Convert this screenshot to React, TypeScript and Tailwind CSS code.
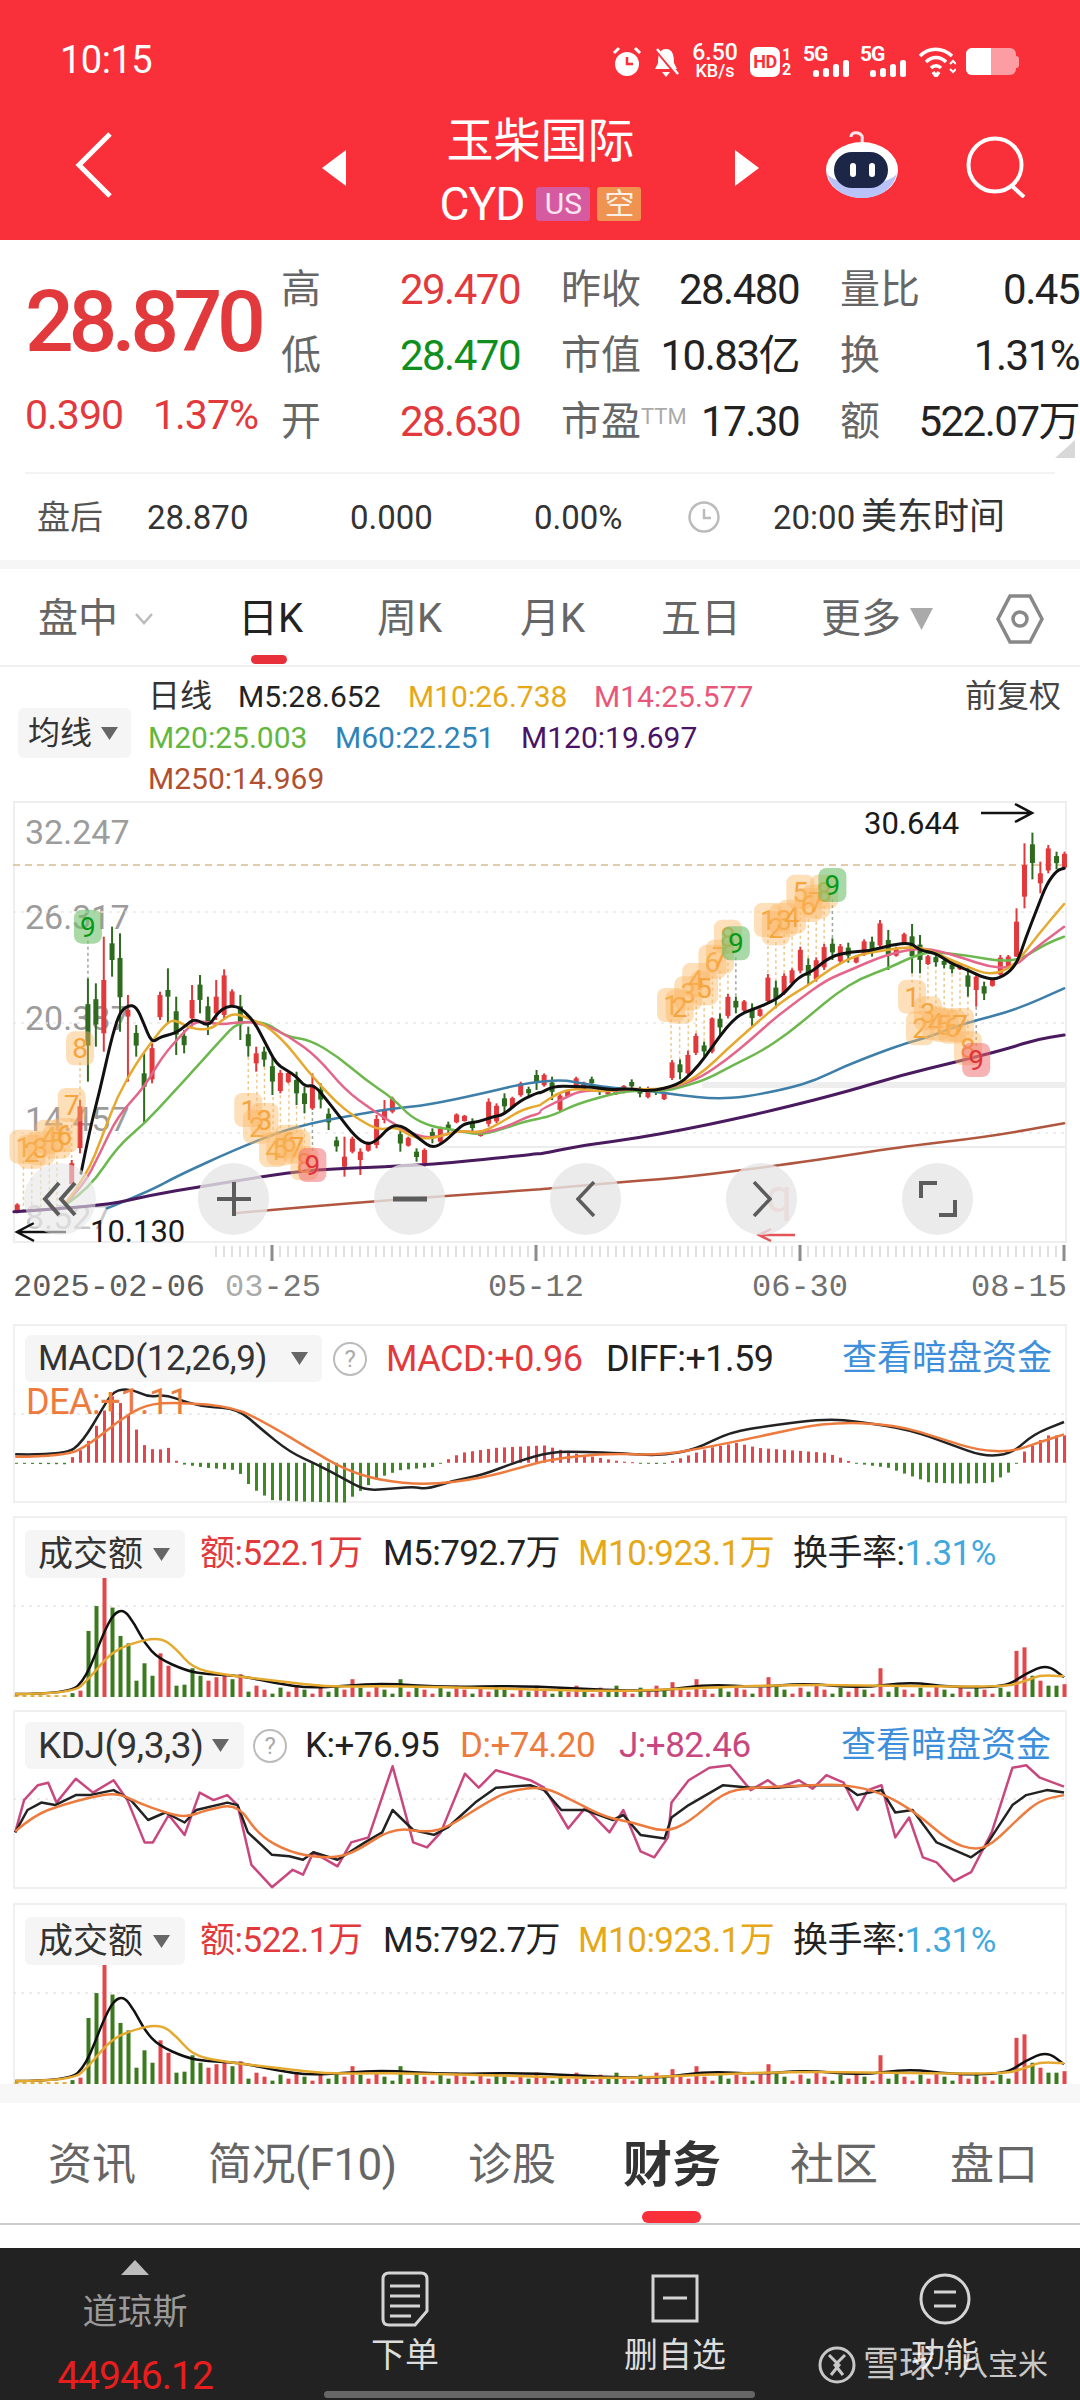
import React from 'react';

type Pt = number[];

const pairs = (s: string): Pt[] => s.trim().split(/\s+/).map((p) => p.split(',').map(Number));
const z5 = ([x, y]: Pt): Pt => [x / 2.9, 780 + y / 3];
const z6 = ([x, y]: Pt): Pt => [540 + x / 2.9, 780 + y / 3];
const z3 = ([x, y]: Pt): Pt => [x / 1.452, 1320 + y / 2.01];

const smooth = (pts: Pt[]) => {
  let d = `M${pts[0][0].toFixed(1)} ${pts[0][1].toFixed(1)}`;
  for (let i = 1; i < pts.length - 1; i++) {
    const mx = (pts[i][0] + pts[i + 1][0]) / 2;
    const my = (pts[i][1] + pts[i + 1][1]) / 2;
    d += ` Q${pts[i][0].toFixed(1)} ${pts[i][1].toFixed(1)} ${mx.toFixed(1)} ${my.toFixed(1)}`;
  }
  const last = pts[pts.length - 1];
  return d + ` L${last[0].toFixed(1)} ${last[1].toFixed(1)}`;
};
const straight = (pts: Pt[]) => pts.map((p) => `${p[0].toFixed(1)},${p[1].toFixed(1)}`).join(' ');

const both = (a: string, b: string) => [...pairs(a).map(z5), ...pairs(b).map(z6)];

// moving averages, read off the zoomed reference
const maLines = [
  {
    color: '#3d7fa8',
    w: 2.5,
    pts: both(
      '310,1285 430,1235 520,1185 680,1110 800,1060 900,1030 1000,1010 1140,985 1240,975 1400,940 1500,915 1568,905',
      '0,905 70,900 130,912 220,925 300,930 400,945 510,957 600,950 720,925 800,900 880,860 980,820 1060,790 1130,770 1230,730 1380,690 1520,625',
    ),
  },
  {
    color: '#4a1a5e',
    w: 3,
    pts: both(
      '40,1295 290,1280 440,1245 580,1220 760,1190 900,1170 1120,1160 1300,1150 1568,1120',
      '0,1122 130,1095 280,1075 420,1048 550,1020 700,985 890,935 1050,885 1210,845 1360,805 1440,778 1520,765',
    ),
  },
  {
    color: '#b0563f',
    w: 2.5,
    pts: both('680,1300 1000,1270 1568,1228', '0,1228 250,1205 440,1190 700,1155 900,1125 1050,1100 1300,1070 1520,1030'),
  },
  {
    color: '#6cb84e',
    w: 2.5,
    pts: both(
      '190,1275 260,1225 340,1100 420,1030 500,940 580,850 640,780 690,725 770,725 830,770 900,780 980,830 1060,900 1140,955 1190,1010 1250,1040 1320,1050 1390,1065 1450,1050 1520,1025 1568,1015',
      '0,1015 40,1005 100,975 180,950 260,930 360,935 430,915 490,895 560,855 640,815 720,760 790,700 860,640 930,595 1010,565 1080,530 1130,515 1230,525 1340,545 1400,535 1470,490 1520,470',
    ),
  },
  {
    color: '#e4668a',
    w: 2.5,
    pts: both(
      '190,1270 240,1220 290,1120 340,1010 420,920 470,830 530,760 570,720 640,735 700,725 760,730 840,770 920,830 1000,930 1080,990 1140,1030 1200,1065 1260,1075 1330,1050 1400,1060 1470,1040 1530,1010 1568,1000',
      '0,990 60,960 120,930 200,935 280,925 340,932 410,915 470,890 540,840 610,780 680,715 750,660 830,600 900,570 1000,525 1090,505 1150,510 1230,535 1300,560 1370,565 1430,510 1520,440',
    ),
  },
  {
    color: '#e6a92f',
    w: 2.5,
    pts: both(
      '190,1270 250,1190 300,1060 340,950 395,850 440,785 490,720 520,725 550,745 610,750 650,715 680,700 720,715 770,735 830,790 890,870 950,940 1000,990 1060,1030 1100,1050 1150,1040 1200,1075 1260,1075 1330,1050 1390,1060 1450,1030 1510,990 1568,975',
      '0,975 50,940 100,925 180,935 260,925 340,930 420,910 480,870 540,810 600,755 660,700 720,650 780,615 850,560 920,525 1000,510 1080,500 1130,510 1180,535 1240,560 1300,585 1370,565 1440,470 1520,372',
    ),
  },
  {
    color: '#111111',
    w: 3,
    pts: both(
      '235,1180 260,1050 290,930 320,790 345,700 372,675 395,680 415,725 440,790 465,770 510,760 540,735 565,715 605,740 630,700 655,680 685,678 710,695 740,730 770,790 800,850 830,870 860,890 885,920 910,915 940,950 985,1010 1030,1070 1065,1095 1095,1080 1130,1040 1160,1035 1190,1055 1220,1080 1255,1105 1290,1085 1330,1045 1350,1030 1390,1025 1430,1010 1460,1005 1510,960 1568,935',
      '0,940 40,918 100,920 150,920 200,930 260,925 320,935 400,915 440,880 480,830 520,770 560,720 595,695 640,680 700,650 750,590 790,575 840,530 900,515 960,512 1020,495 1075,488 1100,510 1150,520 1190,550 1240,570 1290,595 1330,598 1380,560 1410,470 1440,390 1470,310 1500,270 1520,265',
    ),
  },
];

// candles: colour x top bottom [bodyTop bodyBottom]
const c5 =
  'r 50 1270 1300|r 208 1140 1220|r 232 960 1120|g 255 595 905|g 278 610 800|r 301 470 815 600 760|g 325 440 590 490 540|g 348 460 755|r 371 645 905 690 710|g 395 735 830|g 418 820 1030 880 920|r 441 790 910|r 464 635 720|g 487 565 730 630 650|g 511 650 825|g 534 750 820|r 557 615 740 660 715|g 580 585 700|g 603 650 765|r 627 600 720 650 700|r 650 568 720|r 673 628 680|g 697 645 780|g 720 740 830|r 743 800 875 820 850|g 766 800 860|g 790 830 945|r 813 870 940|r 836 875 910|g 860 875 975|g 883 920 1000|r 906 880 990 915 985|g 930 910 985|g 953 985 1050|g 976 1070 1115|r 999 1070 1190 1130 1160|r 1022 1070 1120|r 1045 1105 1185 1115 1140|r 1068 1085 1115|r 1092 1005 1105|r 1115 960 1030 990 1020|r 1138 950 1000|g 1161 1045 1115|r 1184 1070 1100|g 1208 1105 1145|r 1231 1105 1160 1110 1150|g 1254 1045 1090|r 1277 1040 1090|g 1300 1025 1060|r 1324 1000 1030|r 1347 1005 1025|g 1370 1015 1060|r 1394 1050 1070|r 1417 955 1040|r 1440 970 1030|g 1463 940 1000|r 1486 950 985|r 1510 905 950|g 1533 920 950|g 1556 870 930';
const c6 =
  'r 12 880 920|g 35 890 960|r 58 940 995|r 80 930 950|r 105 890 930|r 127 905 930|g 150 890 920|g 173 920 945|r 197 925 945|r 220 925 945|r 243 915 940|g 266 898 930|g 290 920 952|r 313 920 955|g 336 925 945|r 360 935 960|r 383 840 900|g 406 838 898|r 429 812 885 825 880|r 452 760 825|g 476 785 830|r 499 712 820 715 815|g 522 700 765|r 545 642 715|g 568 650 700|r 592 660 695|g 615 670 738|r 638 685 710|r 661 582 672|g 684 602 685|r 708 580 645|r 731 565 615|r 755 500 580|g 778 535 615|r 801 532 605|r 824 492 570|g 848 475 540|r 871 492 550|g 894 488 548|r 917 525 550|r 940 478 528|g 963 470 530|r 986 420 505|g 1010 450 570|r 1033 500 530|r 1056 458 495|g 1079 432 580|g 1102 465 580|r 1125 525 555|g 1148 522 560|g 1172 535 565|g 1195 545 580|r 1218 550 570|g 1241 565 650|r 1265 585 680 590 630|g 1288 605 660|r 1312 595 620|r 1335 525 590|r 1358 525 565|r 1382 385 530 425 530|r 1405 190 385 255 350|g 1428 158 298|r 1451 245 340 280 310|r 1474 195 280|g 1498 215 268|r 1521 215 268';

const CRED = '#e2393d';
const CGREEN = '#2f6b1f';

const candles = [
  ...c5.split('|').map((s) => ({ s, f: z5 })),
  ...c6.split('|').map((s) => ({ s, f: z6 })),
].map(({ s, f }) => {
  const [c, ...n] = s.split(' ');
  const [x, top, bot, bt, bb] = n.map(Number);
  const up = c === 'r';
  const b1 = bt ?? (up ? top + (bot - top) * 0.12 : top + (bot - top) * 0.25);
  const b2 = bb ?? (up ? bot - (bot - top) * 0.1 : top + (bot - top) * 0.65);
  return {
    color: up ? CRED : CGREEN,
    x: f([x, 0])[0],
    top: f([x, top])[1],
    bot: f([x, bot])[1],
    b1: f([x, b1])[1],
    b2: f([x, b2])[1],
  };
});

// TD sequence badges: digit, x, y, tone, end of the dotted line
const seq5 = [
  [1, 68, 1100, 'o', 1290], [2, 92, 1115, 'o', 1290], [3, 118, 1105, 'o', 1290], [4, 143, 1070, 'o', 1290], [5, 165, 1085, 'o', 1290],
  [6, 187, 1065, 'o', 1140], [7, 208, 975, 'o', 1140], [8, 232, 805, 'o', 960], [9, 255, 440, 'g', 595],
  [1, 720, 990, 'o', 830], [2, 745, 1040, 'o', 850], [3, 767, 1020, 'o', 860], [4, 792, 1110, 'o', 945], [5, 813, 1105, 'o', 940],
  [6, 838, 1085, 'o', 910], [7, 860, 1100, 'o', 975], [8, 883, 1150, 'o', 1000], [9, 906, 1155, 'r', 990],
] as const;
const seq6 = [
  [1, 380, 675, 'o', 840], [2, 405, 680, 'o', 838], [3, 430, 640, 'o', 812], [4, 453, 600, 'o', 760], [5, 476, 625, 'o', 785],
  [6, 500, 545, 'o', 712], [7, 522, 530, 'o', 700], [8, 545, 470, 'o', 642], [9, 568, 490, 'g', 650],
  [1, 661, 420, 'o', 582], [2, 684, 445, 'o', 602], [3, 708, 420, 'o', 580], [4, 731, 410, 'o', 565], [5, 755, 335, 'o', 500],
  [6, 778, 375, 'o', 535], [7, 801, 365, 'o', 532], [8, 824, 335, 'o', 492], [9, 848, 315, 'g', 475],
  [1, 1079, 650, 'o', 580], [2, 1102, 745, 'o', 580], [3, 1125, 700, 'o', 555], [4, 1148, 730, 'o', 560], [5, 1172, 735, 'o', 565],
  [6, 1195, 740, 'o', 580], [7, 1218, 735, 'o', 570], [8, 1241, 805, 'o', 650], [9, 1265, 840, 'r', 680],
] as const;

const tones: Record<string, { fill: string; op: number; text: string }> = {
  o: { fill: '#fbb865', op: 0.45, text: '#f5a53c' },
  g: { fill: '#6fbf6a', op: 0.6, text: '#079a1a' },
  r: { fill: '#f0656a', op: 0.5, text: '#e2333a' },
};

const badges = [
  ...seq5.map((b) => ({ b, f: z5 })),
  ...seq6.map((b) => ({ b, f: z6 })),
].map(({ b, f }) => {
  const [x, y] = f([b[1], b[2]]);
  const end = f([b[1], b[4]])[1];
  return { d: b[0], x, y, tone: b[3], end };
});

const MainChart = () => (
  <svg className="absolute inset-0 w-full h-full" viewBox="0 801 1080 442" fill="none">
    <g fontFamily="Roboto, sans-serif" fontSize="34" fill="#9c9c9c">
      <text x="25" y="844">32.247</text>
      <text x="25" y="929">26.317</text>
      <text x="25" y="1030">20.387</text>
      <text x="25" y="1131">14.457</text>
      <text x="25" y="1229" opacity="0.55">8.527</text>
    </g>
    <line x1="13" x2="1067" y1="865" y2="865" stroke="#d8bd8e" strokeWidth="1.5" strokeDasharray="7 5" />
    <g stroke="#e9e9e9" strokeWidth="1.5" strokeDasharray="3 5">
      <line x1="13" x2="1067" y1="912" y2="912" />
      <line x1="13" x2="1067" y1="1023" y2="1023" />
      <line x1="13" x2="1067" y1="1133" y2="1133" />
    </g>
    <rect x="702" y="1082" width="365" height="6" fill="#eeeeee" />
    <line x1="441" x2="1067" y1="1147" y2="1147" stroke="#ececec" strokeWidth="2" />
    {badges.map((b, i) => (
      <line
        key={i}
        x1={b.x}
        x2={b.x}
        y1={b.y < b.end ? b.y + 14 : b.y - 14}
        y2={b.end}
        stroke={b.tone === 'o' ? '#eec98c' : '#9aa89a'}
        strokeWidth="1.5"
        strokeDasharray="3 3"
      />
    ))}
    {candles.map((c, i) => (
      <g key={i} fill={c.color}>
        <rect x={c.x - 1} y={c.top} width="2" height={c.bot - c.top} />
        <rect x={c.x - 2.5} y={c.b1} width="5" height={c.b2 - c.b1} />
      </g>
    ))}
    {maLines.map((l, i) => (
      <path key={i} d={smooth(l.pts)} stroke={l.color} strokeWidth={l.w} strokeLinejoin="round" strokeLinecap="round" />
    ))}
    {badges.map((b, i) => (
      <g key={i}>
        <rect x={b.x - 14} y={b.y - 17} width="28" height="34" rx="8" fill={tones[b.tone].fill} opacity={tones[b.tone].op} />
        <text
          x={b.x}
          y={b.y + 10}
          textAnchor="middle"
          fontFamily="Roboto, sans-serif"
          fontSize="28"
          fill={tones[b.tone].text}
        >
          {b.d}
        </text>
      </g>
    ))}
    <text x="864" y="834" fontFamily="Roboto, sans-serif" fontSize="31" fill="#1a1a1a">30.644</text>
    <path d="M981 813 H1032 M1015 804 L1032 813 L1015 822" stroke="#111" strokeWidth="2.5" />
    <text x="90" y="1242" fontFamily="Roboto, sans-serif" fontSize="31" fill="#1a1a1a">10.130</text>
    <path d="M66 1232 H17 M34 1223 L17 1232 L34 1241" stroke="#111" strokeWidth="2.5" />
    <text x="766" y="1212" fontFamily="Roboto, sans-serif" fontSize="46" fill="#f2b4b4">q</text>
    <path d="M795 1235 H760 M771 1229 L759 1235 L771 1241" stroke="#e2545a" strokeWidth="2.5" />
  </svg>
);

const ticks = Array.from({ length: 107 }, (_, i) => 216 + i * 8);

const Ruler = () => (
  <svg className="block w-full h-[19px]" viewBox="0 0 1080 19" fill="none">
    {ticks.map((x) => (
      <line key={x} x1={x} x2={x} y1="3" y2="14" stroke="#d6d6d6" strokeWidth="1.5" />
    ))}
    {[272, 536, 800, 1064].map((x) => (
      <line key={x} x1={x} x2={x} y1="2" y2="18" stroke="#8c8c8c" strokeWidth="3" />
    ))}
  </svg>
);

const lerp = (keys: Pt[], x: number) => {
  if (x <= keys[0][0]) return keys[0][1];
  for (let i = 1; i < keys.length; i++) {
    if (x <= keys[i][0]) {
      const [x0, y0] = keys[i - 1];
      const [x1, y1] = keys[i];
      return y0 + ((y1 - y0) * (x - x0)) / (x1 - x0);
    }
  }
  return keys[keys.length - 1][1];
};

const macdKeys = pairs(
  '22,-2 95,-3 100,5 125,35 150,100 162,135 175,120 185,100 197,70 210,35 225,25 245,30 255,5 265,-3 300,-10 345,-15 365,-50 395,-75 440,-78 500,-80 520,-60 550,-30 580,-15 630,-8 645,3 670,20 720,30 790,35 830,20 870,10 900,3 960,-3 980,5 1030,30 1070,40 1100,30 1200,20 1225,8 1240,-1 1290,-10 1350,-40 1400,-42 1440,-40 1470,-15 1485,20 1520,55 1545,55',
);
const macdBars = Array.from({ length: 132 }, (_, i) => 16.5 + i * 8);

const MacdChart = () => (
  <svg className="absolute inset-0 w-full h-full" viewBox="0 1324 1080 179" fill="none">
    <line x1="13" x2="1067" y1="1414" y2="1414" stroke="#e6e6e6" strokeWidth="1.5" strokeDasharray="3 5" />
    {macdBars.map((x) => {
      const v = lerp(macdKeys, x * 1.452);
      const y0 = 1320 + 287 / 2.01;
      const h = Math.abs(v) / 2.01;
      return (
        <rect
          key={x}
          x={x - 1.5}
          y={v > 0 ? y0 - h : y0}
          width="3"
          height={Math.max(h, 1)}
          fill={v > 0 ? '#e2474c' : '#3d8a23'}
        />
      );
    })}
    <path
      d={smooth(pairs('22,270 95,272 120,245 150,175 165,142 190,138 215,155 240,150 270,165 300,175 345,178 380,220 420,265 460,290 500,320 530,342 560,340 600,335 620,340 660,322 700,312 750,285 800,265 850,265 900,268 960,273 1010,260 1060,225 1120,212 1200,198 1250,205 1320,220 1380,250 1430,275 1470,268 1500,230 1545,205').map(z3))}
      stroke="#222"
      strokeWidth="2.5"
    />
    <path
      d={smooth(pairs('22,275 95,274 130,250 170,205 210,170 260,165 340,175 390,210 450,260 500,300 550,322 620,332 700,318 760,295 800,280 880,268 960,272 1030,255 1100,235 1200,205 1300,210 1370,240 1420,262 1470,265 1510,245 1545,230').map(z3))}
      stroke="#ee7b3e"
      strokeWidth="2.5"
    />
  </svg>
);

// tall volume bars at the start and the few spikes later on: index -> zoomed top
const volHead: Record<number, [number, string]> = {
  7: [750, 'g'], 8: [745, 'r'], 9: [625, 'g'], 10: [575, 'g'], 11: [505, 'r'], 12: [578, 'g'], 13: [635, 'g'], 14: [650, 'g'],
  15: [725, 'g'], 16: [690, 'g'], 17: [715, 'g'], 18: [670, 'r'], 19: [695, 'r'], 20: [735, 'g'], 21: [733, 'g'], 22: [700, 'g'],
  23: [715, 'g'], 24: [725, 'r'], 25: [718, 'r'], 26: [715, 'r'], 27: [722, 'g'], 28: [712, 'r'],
};
const volTail: Record<number, [number, string]> = {
  42: [722, 'r'], 48: [722, 'g'], 82: [728, 'r'], 85: [722, 'r'], 94: [718, 'r'], 108: [700, 'r'], 125: [665, 'r'], 126: [658, 'r'],
  127: [715, 'g'], 128: [725, 'r'], 129: [735, 'g'], 131: [732, 'r'],
};
const volBars = Array.from({ length: 132 }, (_, i) => {
  const x = 16.5 + i * 8;
  const spec = volHead[i] ?? volTail[i];
  if (i < 7) return { x, top: z3([0, 754])[1], color: '#e6a92f' };
  if (spec) return { x, top: z3([0, spec[0]])[1], color: spec[1] === 'r' ? '#e2474c' : '#3b7a1e' };
  const top = 735 + ((i * 7) % 5) * 4;
  const red = (i * 5) % 7 < 4;
  return { x, top: z3([0, top])[1], color: red ? '#e2474c' : '#3b7a1e' };
});

const VolumeChart = () => (
  <svg className="absolute inset-0 w-full h-full" viewBox="0 1516 1080 181" fill="none">
    <line x1="13" x2="1067" y1="1606" y2="1606" stroke="#e6e6e6" strokeWidth="1.5" strokeDasharray="3 5" />
    {volBars.map((b) => (
      <rect key={b.x} x={b.x - 2} y={b.top} width="4" height={1697 - b.top} fill={b.color} />
    ))}
    <path
      d={smooth(pairs('22,752 100,752 125,720 150,630 165,590 180,582 195,610 210,650 230,680 270,705 300,712 350,715 400,730 450,740 500,735 560,730 640,738 760,735 900,745 960,745 1030,732 1100,738 1170,730 1250,740 1320,727 1380,738 1460,738 1490,710 1520,692 1545,718').map(z3))}
      stroke="#111"
      strokeWidth="2.5"
    />
    <path
      d={smooth(pairs('22,752 105,752 130,720 160,670 190,650 232,637 255,660 280,700 320,712 400,725 480,738 560,735 700,740 900,747 1000,740 1150,733 1300,735 1460,738 1490,725 1510,714 1545,716').map(z3))}
      stroke="#e6a92f"
      strokeWidth="2.5"
    />
  </svg>
);

const KdjChart = () => (
  <svg className="absolute inset-0 w-full h-full" viewBox="0 1710 1080 179" fill="none">
    <line x1="13" x2="1067" y1="1799" y2="1799" stroke="#e6e6e6" strokeWidth="1.5" strokeDasharray="3 5" />
    <polyline
      points={straight(pairs('22,1030 35,965 55,935 70,930 82,970 110,922 135,950 165,925 185,965 210,1050 222,1050 245,995 268,1035 290,950 310,965 330,955 345,975 365,1095 395,1140 425,1105 440,1115 455,1070 490,1098 510,1050 535,1040 570,897 600,1050 620,1060 640,1030 675,912 695,940 720,905 770,925 790,940 825,1022 850,980 885,1030 905,985 930,1068 950,1080 970,1040 975,970 1000,925 1030,900 1060,895 1090,945 1115,925 1130,940 1160,925 1180,942 1200,915 1225,930 1245,985 1260,945 1280,935 1300,1040 1320,1000 1340,1080 1360,1090 1385,1128 1410,1110 1440,1030 1470,900 1490,895 1510,920 1545,938').map(z3))}
      stroke="#c9477f"
      strokeWidth="2.5"
      strokeLinejoin="round"
    />
    <polyline
      points={straight(pairs('22,1030 40,985 60,970 80,975 110,955 130,955 165,945 190,965 215,1005 240,990 268,1010 285,985 330,970 345,975 360,1030 395,1075 420,1078 440,1085 455,1070 490,1085 530,1050 555,1030 570,985 600,1025 630,1035 650,1020 690,970 720,940 770,935 790,945 815,985 850,985 890,1005 905,995 930,1035 965,1042 975,1000 1000,975 1050,935 1090,940 1125,940 1175,935 1225,935 1245,955 1280,945 1300,990 1325,985 1360,1050 1410,1080 1430,1060 1470,975 1490,955 1520,945 1545,950').map(z3))}
      stroke="#222"
      strokeWidth="2.5"
      strokeLinejoin="round"
    />
    <path
      d={smooth(pairs('22,1028 50,995 90,975 130,960 170,950 200,970 240,990 270,1000 300,985 345,972 375,1035 420,1070 470,1082 510,1075 570,1020 620,1030 650,1020 700,975 740,945 790,938 830,965 880,1000 920,1010 965,1030 1000,1010 1050,950 1090,940 1175,935 1225,933 1280,950 1330,990 1380,1050 1415,1065 1440,1055 1480,1000 1510,965 1545,955').map(z3))}
      stroke="#ee7b3e"
      strokeWidth="2.5"
    />
  </svg>
);

const Caret = () => (
  <svg width="17" height="13" viewBox="0 0 17 13" className="shrink-0">
    <path d="M0 0 H17 L8.5 13 Z" fill="#666" />
  </svg>
);

const Help = () => (
  <span className="shrink-0 w-[34px] h-[34px] rounded-full border-2 border-[#bbb] flex items-center justify-center text-[24px] leading-none text-[#aaa]">
    ?
  </span>
);

const Signal = () => (
  <div className="w-[46px] relative h-[30px]">
    <span className="absolute left-0 top-[-3px] text-[21px] leading-none font-bold tracking-[-1px]">5G</span>
    <svg className="absolute left-[10px] bottom-0" width="36" height="18" viewBox="0 0 36 18" fill="#fff">
      <rect x="0" y="11" width="6" height="7" rx="2.5" />
      <rect x="10" y="9" width="6" height="9" rx="2.5" />
      <rect x="20" y="5" width="6" height="13" rx="2.5" />
      <rect x="30" y="1" width="6" height="17" rx="2.5" />
    </svg>
  </div>
);

const VolumePanel = () => (
  <div className="relative h-[181px] px-[13px]">
    <div className="h-full border-2 border-b-0 border-[#f0f0f0]" />
    <VolumeChart />
    <div className="absolute left-[25px] top-[12px] flex items-center text-[35px] tracking-[-0.5px] whitespace-nowrap">
      <div className="w-[160px] h-[48px] bg-[#f5f5f5] rounded-md flex items-center pl-[13px] gap-[10px] tracking-normal text-[#333] leading-none">
        <span>成交额</span>
        <Caret />
      </div>
      <span className="ml-[15px] w-[183px] text-[#e2393d]">额:522.1万</span>
      <span className="w-[195px] text-[#222]">M5:792.7万</span>
      <span className="w-[215px] text-[#e6a817]">M10:923.1万</span>
      <span className="text-[#222]">
        换手率:<span className="text-[#3fa9df]">1.31%</span>
      </span>
    </div>
  </div>
);

const RoundBtn = ({ children }: { children: React.ReactNode }) => (
  <div className="w-[71px] h-[72px] rounded-full bg-[#e6e6e6]/80 flex items-center justify-center">{children}</div>
);

const labelCls = 'text-[40px] text-[#666] leading-none whitespace-nowrap';
const valueCls = 'text-[42px] tracking-[-1.5px] leading-none whitespace-nowrap';

const QuoteRow = ({
  label,
  value,
  valueCls: vc,
  label2,
  value2,
  label3,
  value3,
}: {
  label: string;
  value: string;
  valueCls: string;
  label2: React.ReactNode;
  value2: string;
  label3: string;
  value3: string;
}) => (
  <div className="h-[66px] grid grid-cols-[239px_238px_239px] gap-x-[41px] items-center">
    <div className="flex justify-between items-center">
      <span className={labelCls}>{label}</span>
      <span className={`${valueCls} ${vc}`}>{value}</span>
    </div>
    <div className="flex justify-between items-center">
      <span className={labelCls}>{label2}</span>
      <span className={`${valueCls} text-[#222]`}>{value2}</span>
    </div>
    <div className="flex justify-between items-center">
      <span className={labelCls}>{label3}</span>
      <span className={`${valueCls} text-[#222]`}>{value3}</span>
    </div>
  </div>
);

export default function App() {
  return (
    <div className="w-[1080px] h-[2400px] overflow-hidden bg-white relative font-['Roboto','Noto_Sans_CJK_SC',sans-serif]">
      {/* red header */}
      <div className="h-[240px] bg-[#f9303a] text-white">
        <div className="h-[100px] relative">
          <span className="absolute left-[60px] top-[41px] text-[38px] leading-none tracking-[-0.5px]">10:15</span>
          <div className="absolute left-[612px] top-[44px] flex items-center">
            <svg width="30" height="32" viewBox="0 0 30 32" fill="none">
              <circle cx="15" cy="18" r="12" fill="#fff" />
              <path d="M15 11 V18 H21" stroke="#f9303a" strokeWidth="2.5" />
              <path d="M2 7 L7 2 M28 7 L23 2" stroke="#fff" strokeWidth="3" />
            </svg>
            <svg className="ml-[10px]" width="28" height="32" viewBox="0 0 28 32" fill="none">
              <path d="M14 3 C7 3 6 10 6 17 L3 23 H25 L22 17 C22 10 21 3 14 3 Z M10 26 H18 L14 31 Z" fill="#fff" />
              <path d="M3 2 L26 30" stroke="#f9303a" strokeWidth="4" />
              <path d="M5 3 L26 28" stroke="#fff" strokeWidth="2.5" />
            </svg>
            <div className="ml-[11px] w-[48px] flex flex-col items-center text-[23px] leading-[17px] font-medium">
              <span>6.50</span>
              <span className="mt-[1px] text-[18px] whitespace-nowrap">KB/s</span>
            </div>
            <div className="ml-[11px] w-[30px] h-[30px] bg-white rounded-[7px] flex items-center justify-center text-[18px] font-bold tracking-[-0.5px] text-[#f9303a] leading-none">
              HD
            </div>
            <div className="ml-[2px] w-[12px] flex flex-col text-[16px] leading-[15px] font-bold">
              <span>1</span>
              <span>2</span>
            </div>
            <div className="ml-[9px]">
              <Signal />
            </div>
            <div className="ml-[11px]">
              <Signal />
            </div>
            <svg className="ml-[12px]" width="38" height="30" viewBox="0 0 38 30" fill="none" stroke="#fff" strokeWidth="3.5">
              <path d="M2 9 C11 0 24 0 34 9" />
              <path d="M8 15 C14 9 22 9 28 15" />
              <path d="M13 21 C16 18 20 18 23 21" />
              <path d="M15 25 L18 29 L21 25" />
              <path d="M32 17 L35 14 L38 17 M32 22 L35 25 L38 22" strokeWidth="2" />
            </svg>
            <div className="ml-[10px] w-[50px] h-[27px] rounded-[6px] bg-[#fb9da2] overflow-hidden">
              <div className="w-[25px] h-full bg-white" />
            </div>
            <div className="w-[3px] h-[12px] rounded-r-sm bg-[#fb9da2]" />
          </div>
        </div>
        <div className="h-[140px] flex items-start">
          <svg className="ml-[74px] mt-[32px]" width="40" height="66" viewBox="0 0 40 66" fill="none">
            <path d="M36 2 L5 33 L36 64" stroke="#fff" strokeWidth="5" />
          </svg>
          <svg className="ml-[208px] mt-[50px]" width="24" height="36" viewBox="0 0 24 36">
            <path d="M24 0 V36 L0 18 Z" fill="#fff" />
          </svg>
          <div className="w-[389px] flex flex-col items-center">
            <span className="mt-[19px] h-[44px] text-[47px] leading-[44px] whitespace-nowrap">玉柴国际</span>
            <div className="mt-[19px] flex items-center h-[44px]">
              <span className="text-[46px] leading-none tracking-[-1px]">CYD</span>
              <span className="ml-[12px] w-[54px] h-[34px] rounded-[3px] bg-[#d65aa0] flex items-center justify-center text-[30px] leading-none text-white/85">
                US
              </span>
              <span className="ml-[7px] w-[44px] h-[34px] rounded-[3px] bg-[#ee9450] flex items-center justify-center text-[30px] leading-none text-white/85">
                空
              </span>
            </div>
          </div>
          <svg className="mt-[50px]" width="24" height="36" viewBox="0 0 24 36">
            <path d="M0 0 V36 L24 18 Z" fill="#fff" />
          </svg>
          <svg className="ml-[66px] mt-[31px]" width="74" height="68" viewBox="0 0 74 68">
            <path d="M26 6 C26 1 34 0 37 5 C38 8 36 10 38 13" stroke="#f8e6ee" strokeWidth="3" fill="none" />
            <ellipse cx="37" cy="39" rx="36" ry="28" fill="#ffffff" />
            <path d="M2 42 C6 60 22 67 37 67 C52 67 68 60 72 42 C66 56 8 56 2 42 Z" fill="#b9c3f7" />
            <rect x="9" y="21" width="54" height="36" rx="18" fill="#1c2647" />
            <rect x="25" y="32" width="6" height="14" rx="3" fill="#fff" />
            <rect x="44" y="32" width="6" height="14" rx="3" fill="#fff" />
          </svg>
          <svg className="ml-[67px] mt-[36px]" width="62" height="62" viewBox="0 0 62 62" fill="none">
            <circle cx="29" cy="29" r="26.5" stroke="#fff" strokeWidth="4" />
            <path d="M46 50 L58 61" stroke="#fff" strokeWidth="4" />
          </svg>
        </div>
      </div>

      {/* quote */}
      <div className="h-[232px] flex relative">
        <div className="w-[281px] pl-[25px]">
          <div className="mt-[37px] h-[90px] flex items-center text-[86px] leading-none font-medium tracking-[-5.5px] text-[#e2393d] whitespace-nowrap">
            28.870
          </div>
          <div className="mt-[28px] h-[40px] flex items-center text-[41px] leading-none tracking-[-1px] text-[#e2393d] whitespace-nowrap">
            <span className="w-[128px]">0.390</span>
            <span>1.37%</span>
          </div>
        </div>
        <div className="pt-[17px]">
          <QuoteRow label="高" value="29.470" valueCls="text-[#e2393d]" label2="昨收" value2="28.480" label3="量比" value3="0.45" />
          <QuoteRow label="低" value="28.470" valueCls="text-[#0f8f1e]" label2="市值" value2="10.83亿" label3="换" value3="1.31%" />
          <QuoteRow
            label="开"
            value="28.630"
            valueCls="text-[#e2393d]"
            label2={
              <>
                市盈<sup className="text-[22px] text-[#aaa]">TTM</sup>
              </>
            }
            value2="17.30"
            label3="额"
            value3="522.07万"
          />
        </div>
        <svg className="absolute right-[5px] top-[200px]" width="20" height="18" viewBox="0 0 20 18">
          <path d="M20 0 V18 H0 Z" fill="#d8d8d8" />
        </svg>
      </div>
      <div className="mx-[25px] h-[2px] bg-[#f3f3f3]" />
      <div className="h-[86px] flex items-center pl-[37px] text-[33px] leading-none text-[#333] whitespace-nowrap">
        <span className="w-[110px] text-[#555]">盘后</span>
        <span className="w-[203px]">28.870</span>
        <span className="w-[184px]">0.000</span>
        <span className="w-[154px]">0.00%</span>
        <span className="w-[85px]">
          <svg width="32" height="32" viewBox="0 0 32 32" fill="none">
            <circle cx="16" cy="16" r="14.5" stroke="#bbb" strokeWidth="2.5" />
            <path d="M16 8 V17 H23" stroke="#bbb" strokeWidth="2.5" />
          </svg>
        </span>
        <span className="w-[88px]">20:00</span>
        <span className="text-[36px]">美东时间</span>
      </div>
      <div className="h-[9px] bg-[#f6f6f6]" />

      {/* period tabs */}
      <div className="h-[98px] relative flex items-center pl-[38px] pt-[3px] border-b-2 border-[#f0f0f0] text-[40px] leading-none text-[#666] whitespace-nowrap">
        <span className="w-[97px]">盘中</span>
        <svg className="mr-[85px]" width="18" height="12" viewBox="0 0 18 12" fill="none">
          <path d="M1 1 L9 10 L17 1" stroke="#bbb" strokeWidth="2.5" />
        </svg>
        <span className="w-[139px] text-[#222]">日K</span>
        <span className="w-[143px]">周K</span>
        <span className="w-[141px]">月K</span>
        <span className="w-[160px]">五日</span>
        <span className="w-[89px]">更多</span>
        <svg width="23" height="22" viewBox="0 0 23 22">
          <path d="M0 0 H23 L11.5 22 Z" fill="#aaa" />
        </svg>
        <svg className="ml-[63px]" width="48" height="52" viewBox="0 0 48 52" fill="none" stroke="#888" strokeWidth="3.5">
          <path d="M14 3 H34 L46 26 L34 49 H14 L2 26 Z" />
          <circle cx="24" cy="26" r="7" />
        </svg>
        <div className="absolute left-[251px] bottom-[1px] w-[36px] h-[9px] rounded-full bg-[#e8303a]" />
      </div>

      {/* MA legend */}
      <div className="h-[134px] relative pt-[9px] pl-[148px] text-[30px] leading-[41px] whitespace-nowrap">
        <div className="flex">
          <span className="w-[90px] text-[#333] text-[32px]">日线</span>
          <span className="w-[170px] text-[#222]">M5:28.652</span>
          <span className="w-[186px] text-[#e6a817]">M10:26.738</span>
          <span className="text-[#e8567a]">M14:25.577</span>
        </div>
        <div className="flex">
          <span className="w-[187px] text-[#62b83e]">M20:25.003</span>
          <span className="w-[186px] text-[#2f83b8]">M60:22.251</span>
          <span className="text-[#4a1366]">M120:19.697</span>
        </div>
        <div className="flex">
          <span className="text-[#b0502f]">M250:14.969</span>
        </div>
        <span className="absolute right-[19px] top-[9px] text-[32px] text-[#444]">前复权</span>
        <div className="absolute left-[18px] top-[41px] w-[113px] h-[50px] bg-[#f5f5f5] rounded-md flex items-center pl-[10px] gap-[9px] text-[32px] text-[#333]">
          均线
          <Caret />
        </div>
      </div>

      {/* main chart */}
      <div className="relative h-[442px] px-[13px]">
        <div className="h-full border-2 border-[#eeeeee]" />
        <MainChart />
        <div className="absolute left-[24px] top-[362px] w-[72px] h-[72px] rounded-full bg-[#e6e6e6]/60 flex items-center justify-center">
          <svg width="36" height="36" viewBox="0 0 36 36" fill="none" stroke="#5c5c5c" strokeWidth="4">
            <path d="M17 2 L3 18 L17 34 M33 2 L19 18 L33 34" />
          </svg>
        </div>
        <div className="absolute left-[198px] top-[362px] flex gap-[105px]">
          <RoundBtn>
            <svg width="34" height="34" viewBox="0 0 34 34" stroke="#5c5c5c" strokeWidth="4">
              <path d="M0 17 H34 M17 0 V34" />
            </svg>
          </RoundBtn>
          <RoundBtn>
            <svg width="34" height="6" viewBox="0 0 34 6" stroke="#5c5c5c" strokeWidth="5">
              <path d="M0 3 H34" />
            </svg>
          </RoundBtn>
          <RoundBtn>
            <svg width="20" height="36" viewBox="0 0 20 36" fill="none" stroke="#5c5c5c" strokeWidth="3.5">
              <path d="M18 1 L2 18 L18 35" />
            </svg>
          </RoundBtn>
          <RoundBtn>
            <svg width="20" height="36" viewBox="0 0 20 36" fill="none" stroke="#5c5c5c" strokeWidth="3.5">
              <path d="M2 1 L18 18 L2 35" />
            </svg>
          </RoundBtn>
          <RoundBtn>
            <svg width="38" height="36" viewBox="0 0 38 36" fill="none" stroke="#5c5c5c" strokeWidth="4">
              <path d="M2 17 V2 H18 M36 19 V34 H20" />
            </svg>
          </RoundBtn>
        </div>
      </div>
      <Ruler />
      <div className="h-[62px] flex items-center pl-[13px] pb-[10px] font-['Liberation_Mono','Noto_Sans_CJK_SC',monospace] text-[32px] leading-none text-[#5c5c5c] whitespace-nowrap">
        <span className="w-[212px]">2025-02-06</span>
        <span className="w-[263px] text-[#777]">
          <span className="text-[#aaa]">03</span>-25
        </span>
        <span className="w-[264px] text-[#707070]">05-12</span>
        <span className="w-[219px] text-[#707070]">06-30</span>
        <span className="text-[#707070]">08-15</span>
      </div>

      {/* MACD */}
      <div className="relative h-[179px] px-[13px] mb-[13px]">
        <div className="h-full border-2 border-[#f0f0f0]" />
        <MacdChart />
        <div className="absolute left-[25px] top-[11px] flex items-center whitespace-nowrap text-[36px] tracking-[-0.5px] leading-none">
          <div className="w-[297px] h-[47px] bg-[#f5f5f5] rounded-md flex items-center pl-[13px] gap-[12px] text-[#333]">
            <span className="w-[241px] text-[35px]">MACD(12,26,9)</span>
            <Caret />
          </div>
          <span className="ml-[11px] mr-[19px]">
            <Help />
          </span>
          <span className="w-[220px] text-[#e2393d]">MACD:+0.96</span>
          <span className="w-[236px] text-[#222]">DIFF:+1.59</span>
          <span className="text-[35px] tracking-normal text-[#3d8fdc]">查看暗盘资金</span>
        </div>
        <span className="absolute left-[26px] top-[60px] text-[36px] leading-none tracking-[-0.5px] text-[#ee7b3e]">DEA:+1.11</span>
      </div>

      <div className="mb-[13px]">
        <VolumePanel />
      </div>

      {/* KDJ */}
      <div className="relative h-[179px] px-[13px] mb-[14px]">
        <div className="h-full border-2 border-[#f0f0f0]" />
        <KdjChart />
        <div className="absolute left-[25px] top-[12px] flex items-center whitespace-nowrap text-[35px] tracking-[-0.5px] leading-none">
          <div className="w-[219px] h-[47px] bg-[#f5f5f5] rounded-md flex items-center pl-[13px] gap-[9px] text-[#333]">
            <span className="w-[165px] text-[37px] tracking-[-0.5px]">KDJ(9,3,3)</span>
            <Caret />
          </div>
          <span className="ml-[9px] mr-[18px]">
            <Help />
          </span>
          <span className="w-[155px] text-[#222]">K:+76.95</span>
          <span className="w-[159px] text-[#ee7b3e]">D:+74.20</span>
          <span className="w-[222px] text-[#c9477f]">J:+82.46</span>
          <span className="text-[35px] tracking-normal text-[#3d8fdc]">查看暗盘资金</span>
        </div>
      </div>

      <VolumePanel />
      <div className="h-[19px] bg-[#f7f7f7]" />

      {/* bottom tabs */}
      <div className="h-[145px] relative">
        <div className="h-[120px] flex items-center pl-[48px] pt-[4px] text-[44px] leading-none text-[#666] whitespace-nowrap">
          <span className="w-[160px]">资讯</span>
          <span className="w-[260px] tracking-[-0.5px]">简况(F10)</span>
          <span className="w-[155px]">诊股</span>
          <span className="w-[167px] text-[49px] font-bold text-[#333]">财务</span>
          <span className="w-[160px]">社区</span>
          <span>盘口</span>
        </div>
        <div className="h-[2px] bg-[#cccccc]" />
        <div className="absolute left-[642px] top-[108px] w-[59px] h-[12px] rounded-full bg-[#f9303a]" />
      </div>

      {/* dark bar */}
      <div className="h-[153px] bg-[#222222] grid grid-cols-4 relative whitespace-nowrap">
        <div className="flex flex-col items-center">
          <svg className="mt-[12px]" width="28" height="15" viewBox="0 0 28 15">
            <path d="M14 0 L28 15 H0 Z" fill="#bdbdbd" />
          </svg>
          <span className="mt-[20px] text-[35px] leading-none text-[#9a9a9a]">道琼斯</span>
          <span className="mt-[27px] text-[39px] leading-none tracking-[-1px] text-[#e81e1e]">44946.12</span>
        </div>
        <div className="flex flex-col items-center">
          <svg className="mt-[23px]" width="48" height="56" viewBox="0 0 48 56" fill="none" stroke="#d4d4d4" strokeWidth="3">
            <path d="M8 2 H40 Q46 2 46 8 V40 L34 54 H8 Q2 54 2 48 V8 Q2 2 8 2 Z" />
            <path d="M9 15 H39 M9 25 H39 M9 35 H39 M9 45 H30" />
          </svg>
          <span className="mt-[11px] text-[34px] leading-none text-[#dcdcdc]">下单</span>
        </div>
        <div className="flex flex-col items-center">
          <svg className="mt-[26px]" width="48" height="49" viewBox="0 0 48 49" fill="none" stroke="#d4d4d4" strokeWidth="3">
            <rect x="2" y="2" width="44" height="45" />
            <path d="M12 24 H36" />
          </svg>
          <span className="mt-[15px] text-[34px] leading-none text-[#dcdcdc]">删自选</span>
        </div>
        <div className="flex flex-col items-center">
          <svg className="mt-[25px]" width="52" height="52" viewBox="0 0 52 52" fill="none" stroke="#d4d4d4" strokeWidth="3">
            <circle cx="26" cy="26" r="24" />
            <path d="M15 19 H37 M15 33 H37" />
          </svg>
          <span className="mt-[13px] text-[34px] leading-none text-[#dcdcdc]">功能</span>
        </div>
        {/* watermark */}
        <div className="absolute left-[818px] top-[98px] flex items-center leading-none text-white/75">
          <svg width="38" height="38" viewBox="0 0 38 38" fill="none" stroke="#ffffff" strokeOpacity="0.75" strokeWidth="3">
            <circle cx="19" cy="19" r="17" />
            <path d="M11 9 L21 19 L13 29 M27 9 L17 19 L25 29" />
          </svg>
          <span className="ml-[7px] text-[36px]">雪球</span>
          <span className="w-[23px] text-[30px] text-center">:</span>
          <span className="text-[30px]">八宝米</span>
        </div>
        <div className="absolute left-[324px] bottom-[3px] w-[431px] h-[7px] rounded-full bg-[#666666]" />
      </div>
    </div>
  );
}
